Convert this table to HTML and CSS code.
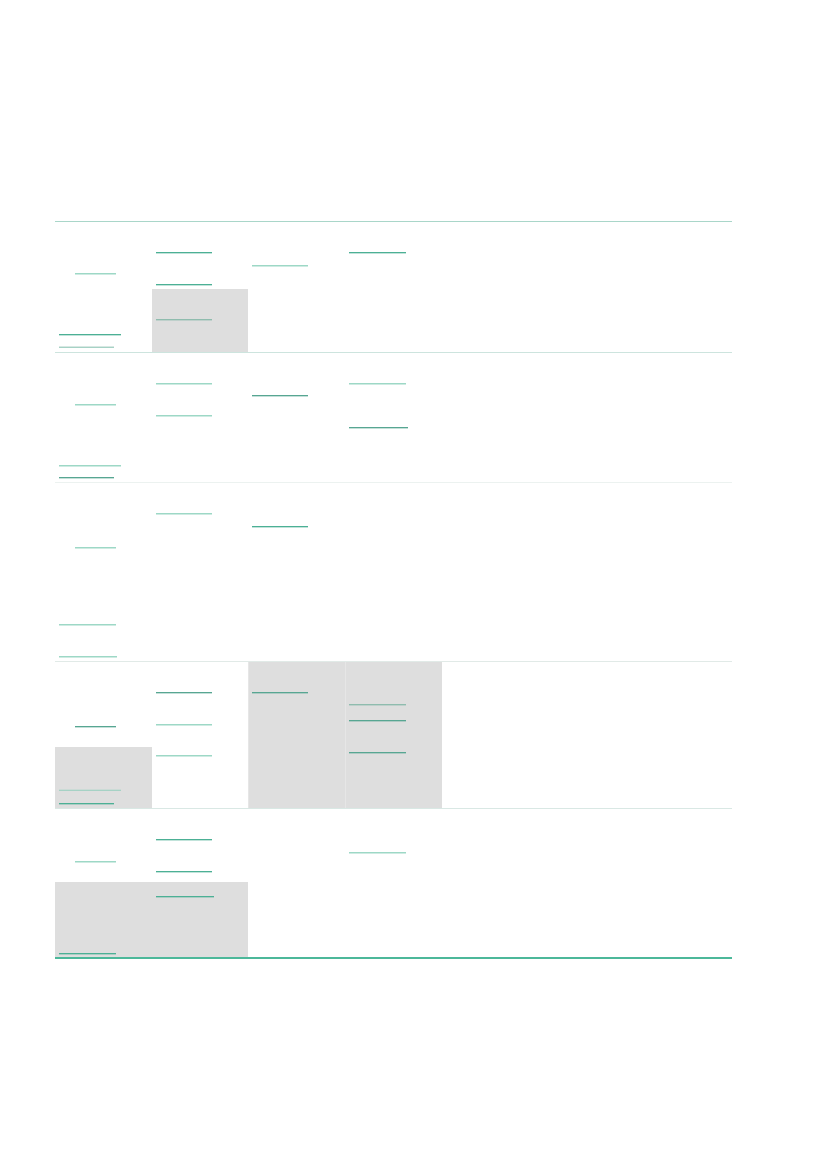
FILE: index.html
```html
<!DOCTYPE html>
<html lang="en">
<head>
<meta charset="utf-8">
<title>Table</title>
<link rel="stylesheet" href="styles.css">
</head>
<body>
<div class="page">
  <div class="table">
    <div class="row r1">
      <div class="cell">
        <div class="ln w41 in l t51"></div>
        <div class="ln w62 d t60"></div>
        <div class="ln w55 g t12"></div>
      </div>
      <div class="cell">
        <div class="ln w56 d t30"></div>
        <div class="ln w56 d t31"></div>
        <div class="shade t4">
          <div class="ln w56 gt t30"></div>
        </div>
      </div>
      <div class="cell"><div class="ln w56 l t43"></div></div>
      <div class="cell"><div class="ln w57 d t30"></div></div>
      <div class="cell"></div><div class="cell"></div><div class="cell"></div>
    </div>
    <div class="row r2">
      <div class="cell">
        <div class="ln w41 in l t51"></div>
        <div class="ln w62 l t60"></div>
        <div class="ln w55 m t11"></div>
      </div>
      <div class="cell">
        <div class="ln w56 l t30"></div>
        <div class="ln w56 l t31"></div>
      </div>
      <div class="cell"><div class="ln w56 m t42"></div></div>
      <div class="cell">
        <div class="ln w57 l t30"></div>
        <div class="ln w59 m t43"></div>
      </div>
      <div class="cell"></div><div class="cell"></div><div class="cell"></div>
    </div>
    <div class="row r3">
      <div class="cell">
        <div class="ln w41 in l t64"></div>
        <div class="ln w57 l t76"></div>
        <div class="ln w58 l t31"></div>
      </div>
      <div class="cell"><div class="ln w56 l t30"></div></div>
      <div class="cell"><div class="ln w56 d t43"></div></div>
      <div class="cell"></div><div class="cell"></div><div class="cell"></div><div class="cell"></div>
    </div>
    <div class="row r4">
      <div class="cell">
        <div class="ln w41 in m t64"></div>
        <div class="shade t20">
          <div class="ln w62 g t43"></div>
          <div class="ln w55 d t12"></div>
        </div>
      </div>
      <div class="cell">
        <div class="ln w56 m t30"></div>
        <div class="ln w56 l t31"></div>
        <div class="ln w56 l t30"></div>
      </div>
      <div class="cell shaded"><div class="ln w56 m t30"></div></div>
      <div class="cell shaded">
        <div class="ln w57 gt t42"></div>
        <div class="ln w57 m t15"></div>
        <div class="ln w57 m t31"></div>
      </div>
      <div class="cell"></div><div class="cell"></div><div class="cell"></div>
    </div>
    <div class="row r5">
      <div class="cell">
        <div class="ln w41 in l t52"></div>
        <div class="shade t20">
          <div class="ln w57 d t71"></div>
        </div>
      </div>
      <div class="cell">
        <div class="ln w56 d t30"></div>
        <div class="ln w56 d t31"></div>
        <div class="shade t10">
          <div class="ln w58 d t14"></div>
        </div>
      </div>
      <div class="cell"></div>
      <div class="cell"><div class="ln w57 l t43"></div></div>
      <div class="cell"></div><div class="cell"></div><div class="cell"></div>
    </div>
  </div>
</div>
</body>
</html>
```

FILE: styles.css
```css
html, body {
  margin: 0;
  padding: 0;
  background: #ffffff;
  font-family: "Liberation Sans", Arial, sans-serif;
}

.page {
  width: 827px;
  height: 1169px;
  padding-top: 221px;
  padding-left: 55px;
  box-sizing: border-box;
}

.table {
  width: 677px;
  border-top: 1px solid #a9d6c9;
  border-bottom: 2px solid #4cb89a;
}

.row {
  display: grid;
  grid-template-columns: repeat(7, 1fr);
  border-bottom: 1px solid #d6e8e2;
}

.row:last-child { border-bottom: none; }

.r1 { height: 130px; border-bottom-color: #cde4de; }
.r2 { height: 129px; border-bottom-color: #ecf2f0; }
.r3 { height: 178px; border-bottom-color: #e1eae7; }
.r4 { height: 146px; border-bottom-color: #d9e8e4; }
.r5 { height: 148px; }

.cell {
  display: flex;
  flex-direction: column;
  min-width: 0;
  padding-left: 4px;
}

.cell.shaded {
  background: #dedede;
  box-shadow: inset 1px 0 0 #e6e6e6;
}

.shade {
  flex: 1;
  margin-left: -4px;
  padding-left: 4px;
  background: #dedede;
  display: flex;
  flex-direction: column;
}

.ln { height: 1px; flex: none; }
.ln.in { margin-left: 16px; }

.d  { background: #4cb095; box-shadow: 0 1px 0 rgba(76,176,149,0.35); }
.m  { background: #57a692; box-shadow: 0 1px 0 rgba(87,166,146,0.35); }
.l  { background: #9dd8c6; box-shadow: 0 1px 0 rgba(157,216,198,0.5); }
.g  { background: #a6d2c5; box-shadow: 0 -1px 0 rgba(190,216,208,0.6); }
.gt { background: #8fbcae; box-shadow: 0 1px 0 rgba(143,188,174,0.4); }

.w41 { width: 41px; }
.w55 { width: 55px; }
.w56 { width: 56px; }
.w57 { width: 57px; }
.w58 { width: 58px; }
.w59 { width: 59px; }
.w62 { width: 62px; }

.t4  { margin-top: 4px; }
.t10 { margin-top: 10px; }
.t11 { margin-top: 11px; }
.t12 { margin-top: 12px; }
.t14 { margin-top: 14px; }
.t15 { margin-top: 15px; }
.t20 { margin-top: 20px; }
.t30 { margin-top: 30px; }
.t31 { margin-top: 31px; }
.t42 { margin-top: 42px; }
.t43 { margin-top: 43px; }
.t51 { margin-top: 51px; }
.t52 { margin-top: 52px; }
.t60 { margin-top: 60px; }
.t64 { margin-top: 64px; }
.t71 { margin-top: 71px; }
.t76 { margin-top: 76px; }
```
